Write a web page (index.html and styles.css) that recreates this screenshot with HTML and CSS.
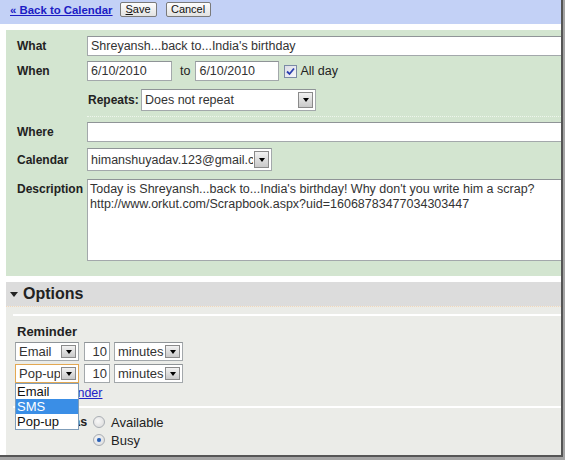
FILE: index.html
```html
<!DOCTYPE html>
<html>
<head>
<meta charset="utf-8">
<link rel="stylesheet" href="styles.css">
</head>
<body>
<div class="frame">
  <div class="topbar">
    <a class="back" href="#">« Back to Calendar</a>
    <span class="btn btn-save"><u>S</u>ave</span>
    <span class="btn btn-cancel">Cancel</span>
  </div>
  <div class="details">
    <div class="row row-what">
      <div class="label">What</div>
      <div class="input wide">Shreyansh...back to...India's birthday</div>
    </div>
    <div class="row row-when">
      <div class="label">When</div>
      <div class="input date1">6/10/2010</div>
      <span class="to">to</span>
      <div class="input date2">6/10/2010</div>
      <span class="checkbox"><svg width="9" height="9" viewBox="0 0 9 9"><path d="M1 4.5 L3.5 7 L8 1.5" fill="none" stroke="#2b3fb0" stroke-width="1.8"/></svg></span>
      <span class="allday">All day</span>
    </div>
    <div class="row row-repeats">
      <div class="label"></div>
      <span class="repeats-label">Repeats:</span>
      <div class="select repeats"><span class="sel-text">Does not repeat</span><span class="arrow"></span></div>
    </div>
    <div class="sep"></div>
    <div class="row row-where">
      <div class="label">Where</div>
      <div class="input wide"></div>
    </div>
    <div class="row row-cal">
      <div class="label">Calendar</div>
      <div class="select calendar"><span class="sel-text">himanshuyadav.123@gmail.com</span><span class="arrow"></span></div>
    </div>
    <div class="row row-desc">
      <div class="label desc-label">Description</div>
      <div class="textarea">Today is Shreyansh...back to...India's birthday! Why don't you write him a scrap?<br>http://www.orkut.com/Scrapbook.aspx?uid=16068783477034303447</div>
    </div>
  </div>
  <div class="options">
    <div class="opt-head"><span class="tri"></span>Options</div>
    <div class="opt-body">
      <div class="opt-inner">
        <div class="reminder-title">Reminder</div>
        <div class="rem-row">
          <div class="select small rem-type"><span class="sel-text">Email</span><span class="arrow"></span></div>
          <div class="input num">10</div>
          <div class="select small rem-unit"><span class="sel-text">minutes</span><span class="arrow"></span></div>
        </div>
        <div class="rem-row">
          <div class="select small rem-type focus"><span class="sel-text">Pop-up</span><span class="arrow"></span>
            <div class="dropdown">
              <div class="dd-item">Email</div>
              <div class="dd-item active">SMS</div>
              <div class="dd-item">Pop-up</div>
            </div>
          </div>
          <div class="input num">10</div>
          <div class="select small rem-unit"><span class="sel-text">minutes</span><span class="arrow"></span></div>
        </div>
        <a class="add" href="#">Add a reminder</a>
      </div>
      <div class="showme">
        <div class="showme-label">Show me as</div>
        <div class="radios">
          <div class="radio-row"><span class="radio"></span>Available</div>
          <div class="radio-row"><span class="radio on"></span>Busy</div>
        </div>
      </div>
    </div>
  </div>
</div>
</body>
</html>
```
FILE: styles.css
```css
html { background: #a4a4a4; }
body {
  margin: 0;
  font-family: "Liberation Sans", Arial, sans-serif;
  font-size: 12.5px;
  color: #222;
}
.frame {
  width: 561px;
  height: 455px;
  background: #fff;
  border-right: 2px solid #555;
  border-bottom: 2px solid #555;
  overflow: hidden;
  display: flex;
  flex-direction: column;
}
.topbar {
  height: 24px;
  flex: none;
  background: #c3d1f6;
  display: flex;
  align-items: flex-start;
  padding-left: 10px;
  padding-top: 2px;
  box-sizing: border-box;
}
.back {
  font-weight: bold;
  font-size: 11.4px;
  color: #1c1cc4;
  text-decoration: underline;
  line-height: 14px;
  margin-top: 1px;
}
.btn {
  height: 15px;
  box-sizing: border-box;
  border: 1px solid #7a7a7a;
  border-radius: 2px;
  background: linear-gradient(#fdfdfd, #e2e2e2);
  font-size: 11px;
  line-height: 13px;
  color: #111;
  text-align: center;
}
.btn-save { margin-left: 7px; width: 37px; }
.btn-cancel { margin-left: 9px; width: 45px; }

.details {
  margin: 6px 0 0 6px;
  background: #d3e5d0;
  padding: 6px 0 15px 11px;
  flex: none;
}
.row { display: flex; align-items: center; }
.label {
  width: 70px;
  flex: none;
  font-weight: bold;
  font-size: 12px;
}
.input, .textarea, .select {
  box-sizing: border-box;
  background: #fff;
  border: 1px solid #a3a8ab;
  border-top-color: #8f9497;
  color: #333;
  font-size: 12.5px;
}
.input {
  height: 20px;
  line-height: 18px;
  padding-left: 3px;
  white-space: nowrap;
  overflow: hidden;
}
.wide { width: 480px; flex: none; }
.row-when { margin-top: 5px; }
.date1 { width: 85px; }
.to { margin: 0 5px 0 8px; }
.date2 { width: 84px; }
.checkbox {
  width: 13px; height: 13px;
  box-sizing: border-box;
  border: 1px solid #7b8aa6;
  background: linear-gradient(135deg, #dcdde6, #f6f6f9);
  margin-left: 5px;
  display: flex; align-items: center; justify-content: center;
}
.allday { margin-left: 3px; }
.row-repeats { margin-top: 8px; }
.repeats-label { font-weight: bold; font-size: 12px; margin-left: 1px; width: 53px; }
.select {
  position: relative;
  display: flex;
  align-items: center;
  padding-left: 3px;
  white-space: nowrap;
}
.sel-text { overflow: hidden; flex: 1; }
.arrow {
  flex: none;
  width: 15px;
  align-self: stretch;
  margin: 2px 2px 2px 1px;
  box-sizing: border-box;
  border: 1px solid #8a8a8a;
  background: linear-gradient(#f2f2f2, #c9c9c9);
  position: relative;
}
.arrow::after {
  content: "";
  position: absolute;
  left: 50%; top: 50%;
  margin-left: -3px; margin-top: -2px;
  border-left: 3px solid transparent;
  border-right: 3px solid transparent;
  border-top: 4px solid #000;
}
.repeats { width: 175px; height: 22px; }
.sep {
  margin: 5px 0 0 70px;
  border-top: 1px dotted #eef6ec;
}
.row-where { margin-top: 5px; }
.row-cal { margin-top: 6px; }
.calendar { width: 185px; height: 23px; }
.row-desc { margin-top: 8px; align-items: flex-start; }
.desc-label { padding-top: 3px; }
.textarea {
  width: 480px;
  flex: none;
  height: 82px;
  padding: 2px 2px;
  line-height: 15px;
  white-space: nowrap;
  overflow: hidden;
}

.options {
  margin: 6px 0 0 6px;
  flex: 1;
  display: flex;
  flex-direction: column;
}
.opt-head {
  height: 24px;
  background: #dcdcdc;
  font-weight: bold;
  font-size: 16px;
  display: flex;
  align-items: center;
  padding-left: 4px;
  flex: none;
}
.tri {
  width: 0; height: 0;
  border-left: 4px solid transparent;
  border-right: 4px solid transparent;
  border-top: 5px solid #222;
  margin-right: 5px;
}
.opt-body {
  flex: 1;
  background: #ebece8;
  border-top: 1px dotted #f2d7bb;
}
.opt-inner {
  margin: 7px 0 0 7px;
  border-top: 2px solid #fff;
  padding: 8px 0 5px 4px;
  display: flex;
  flex-direction: column;
  align-items: flex-start;
}
.reminder-title { font-weight: bold; font-size: 13px; line-height: 16px; }
.rem-row { display: flex; margin-top: 2px; gap: 5px; }
.rem-row + .rem-row { margin-top: 3px; }
.small { height: 19px; font-size: 13px; }
.rem-type { width: 64px; margin-left: -2px; }
.num { width: 26px; text-align: right; padding: 0 2px 0 0; height: 19px; line-height: 17px; font-size: 13px; }
.rem-unit { width: 69px; margin-left: -1px; }
.focus { border-color: #e3a852; }
.dropdown {
  position: absolute;
  left: -1px;
  top: 18px;
  width: 64px;
  box-sizing: border-box;
  background: #fff;
  border: 1px solid #7f9db9;
  z-index: 5;
}
.dd-item { height: 15px; line-height: 15px; padding-left: 1px; color: #111; font-size: 13px; }
.dd-item.active { background: #3a8ee6; color: #fff; }
.add {
  color: #2323c8;
  text-decoration: underline;
  margin-top: 3px;
  line-height: 15px;
}
.showme {
  margin-left: 7px;
  border-top: 2px solid #fff;
  display: flex;
  padding: 5px 0 0 2px;
}
.showme-label { width: 78px; font-weight: bold; font-size: 12.5px; line-height: 18px; }
.radio-row { display: flex; align-items: center; height: 18px; font-size: 13px; }
.radio {
  width: 12px; height: 12px;
  border-radius: 50%;
  box-sizing: border-box;
  border: 1px solid #a9aeb4;
  background: radial-gradient(circle at 40% 40%, #f8f8f8, #d8d8d8);
  margin-right: 6px;
  position: relative;
}
.radio.on::after {
  content: "";
  position: absolute;
  left: 3px; top: 3px;
  width: 4px; height: 4px;
  border-radius: 50%;
  background: #2a5fb0;
  box-shadow: 0 0 1px #7fb0ff;
}
```
